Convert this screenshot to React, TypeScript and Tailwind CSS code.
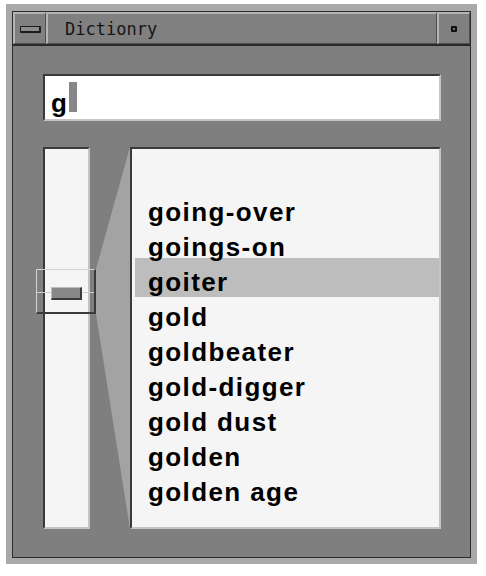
import React from "react";

const words = [
  "going-over",
  "goings-on",
  "goiter",
  "gold",
  "goldbeater",
  "gold-digger",
  "gold dust",
  "golden",
  "golden age",
];

export default function App() {
  return (
    <div className="w-[486px] h-[576px] bg-white relative overflow-hidden">
      {/* window frame */}
      <div className="absolute left-[6px] top-[4px] w-[471px] h-[560px] bg-[#a9a9a9] p-[6px] pt-[7px]">
        <div className="w-full h-full border border-[#2c2c2c] flex flex-col bg-[#7f7f7f]">
          {/* title bar */}
          <div className="flex h-[32px] shrink-0">
            <div className="w-[33px] h-full border-t-2 border-l-2 border-t-[#b4b4b4] border-l-[#b4b4b4] border-b border-r border-b-[#505050] border-r-[#505050] bg-[#808080] flex items-center justify-center">
              <div className="w-[21px] h-[7px] border border-b-2 border-r-2 border-[#1c1c1c] bg-[#8c8c8c] rounded-[1px] mt-[1px]" />
            </div>
            <div className="flex-1 h-full border-t-2 border-l-2 border-t-[#b4b4b4] border-l-[#b4b4b4] border-b border-r border-b-[#505050] border-r-[#505050] bg-[#808080] flex items-center pl-[17px]">
              <span
                className="text-[17px] leading-none text-[#161616] mt-[1px]"
                style={{ fontFamily: '"DejaVu Sans Mono", "Liberation Mono", monospace' }}
              >
                Dictionry
              </span>
            </div>
            <div className="w-[33px] h-full border-t-2 border-l-2 border-t-[#b4b4b4] border-l-[#b4b4b4] border-b border-r border-b-[#505050] border-r-[#505050] bg-[#808080] flex items-center justify-center">
              <div className="w-[6px] h-[6px] bg-[#111] rounded-[1px] flex items-center justify-center mt-[1px]">
                <div className="w-[2px] h-[2px] bg-[#777]" />
              </div>
            </div>
          </div>
          <div className="h-[2px] bg-[#2a2a2a] shrink-0" />

          {/* body */}
          <div className="flex-1 pt-[28px] pl-[30px]">
            {/* input */}
            <div className="w-[398px] h-[47px] border-2 border-t-[#3a3a3a] border-l-[#3a3a3a] border-b-[#c4c4c4] border-r-[#c4c4c4] bg-white flex items-start pl-[6px]">
              <span
                className="text-[26px] leading-[26px] font-bold text-black mt-[14px]"
                style={{ fontFamily: '"Liberation Sans", Arial, sans-serif' }}
              >
                g
              </span>
              <div className="w-[8px] h-[30px] bg-[#878787] ml-[2px] mt-[6px]" />
            </div>

            {/* slider + list */}
            <div className="relative flex mt-[26px] h-[382px]">
              <svg
                className="absolute left-0 top-0"
                width="130"
                height="382"
                viewBox="0 0 130 382"
              >
                <polygon points="53,122 87,0 87,382 53,167" fill="#a3a3a3" />
              </svg>

              <div className="relative w-[47px] h-full border-2 border-t-[#3a3a3a] border-l-[#3a3a3a] border-b-[#c4c4c4] border-r-[#c4c4c4] bg-[#f5f5f5]" />

              {/* thumb */}
              <div className="absolute left-[-7px] top-[122px] w-[60px] h-[45px] border-t border-l border-t-[#d4d4d4] border-l-[#d4d4d4] border-b-2 border-r-2 border-b-[#3a3a3a] border-r-[#3a3a3a] z-10">
                <div className="absolute left-0 right-0 top-[22px] h-px bg-[#cfcfcf]" />
                <div className="absolute left-[14px] top-[17px] w-[31px] h-[13px] bg-[#888] border-t border-l border-t-[#bdbdbd] border-l-[#bdbdbd] border-b-2 border-r-2 border-b-[#3a3a3a] border-r-[#3a3a3a]" />
              </div>

              <div className="relative ml-[40px] w-[311px] h-full border-2 border-t-[#3a3a3a] border-l-[#3a3a3a] border-b-[#c4c4c4] border-r-[#c4c4c4] bg-[#f5f5f5] pt-[39px]">
                {words.map((w, i) => (
                  <div
                    key={w}
                    className={
                      i === 2
                        ? "ml-[3px] h-[39px] mb-[-4px] bg-[#bdbdbd] pl-[13px] pt-[7px] leading-[35px]"
                        : "ml-[3px] h-[35px] pl-[13px] pt-[7px] leading-[35px]"
                    }
                  >
                    <span
                      className="text-[26px] font-bold text-black tracking-[1.4px] whitespace-pre"
                      style={{ fontFamily: '"Liberation Sans", Arial, sans-serif' }}
                    >
                      {w}
                    </span>
                  </div>
                ))}
              </div>
            </div>
          </div>
        </div>
      </div>
    </div>
  );
}
